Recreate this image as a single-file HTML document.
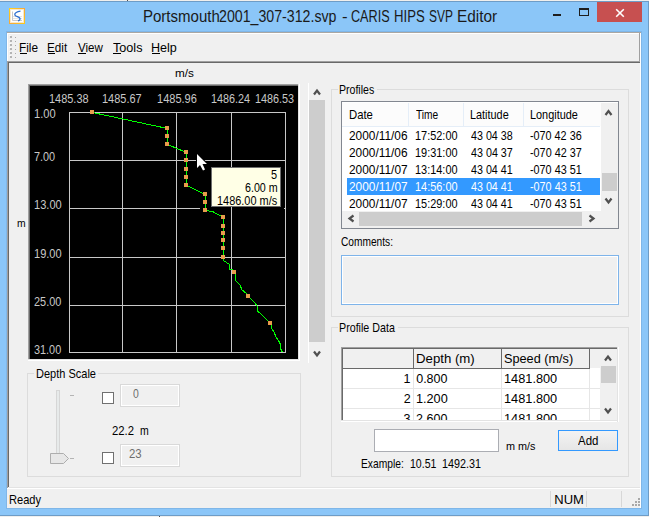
<!DOCTYPE html>
<html><head><meta charset="utf-8"><style>
html,body{margin:0;padding:0;}
body{width:649px;height:517px;position:relative;overflow:hidden;background:#8BC6F8;font-family:"Liberation Sans",sans-serif;}
div,span{position:absolute;}
span{white-space:pre;}
</style></head><body>
<div style="left:0px;top:0px;width:649px;height:1px;background:#F0EFED;"></div>
<div style="left:0px;top:1px;width:649px;height:1px;background:#6E9CC6;"></div>
<div style="left:648px;top:1px;width:1px;height:515px;background:#6E9CC6;"></div>
<div style="left:0px;top:515px;width:649px;height:1px;background:#6E9CC6;"></div>
<div style="left:0px;top:516px;width:649px;height:1px;background:#F0EFED;"></div>
<svg style="position:absolute;left:9px;top:8px" width="16" height="16" viewBox="0 0 16 16">
<defs><linearGradient id="ig" x1="0" y1="0" x2="1" y2="1"><stop offset="0" stop-color="#FFD21A"/><stop offset="0.5" stop-color="#F5A83A"/><stop offset="1" stop-color="#FFC81A"/></linearGradient></defs><rect x="0.5" y="0.5" width="15" height="15" fill="#FFFDF8" stroke="url(#ig)"/>
<rect x="1.5" y="1.5" width="13" height="13" fill="#fff" stroke="#F8E7C8" stroke-width="1"/>
<path d="M3.5 3.5 V12.5 H13" fill="none" stroke="#C8C8C8" stroke-width="1"/>
<path d="M4 8.5 H13 M4 10.5 H13" fill="none" stroke="#E4E4E4" stroke-width="1"/>
<path d="M11.5 3.2 C8 3.6 5.5 5 5.8 6.8 C6.2 8.6 10.5 8.8 11 10.5 C11.3 11.6 10 12.6 9 12.8" fill="none" stroke="#2E6FD0" stroke-width="1.3"/>
</svg>
<span style="left:142.80px;top:9px;font-size:16px;line-height:16px;color:#1A1A1A;transform:scaleX(0.9381);transform-origin:0 0;">Portsmouth</span>
<span style="left:219.49px;top:9px;font-size:16px;line-height:16px;color:#1A1A1A;transform:scaleX(0.8862);transform-origin:0 0;">2001_307-312.svp</span>
<span style="left:341.75px;top:9px;font-size:16px;line-height:16px;color:#1A1A1A;transform:scaleX(1.0459);transform-origin:0 0;">-</span>
<span style="left:351.17px;top:9px;font-size:16px;line-height:16px;color:#1A1A1A;transform:scaleX(0.7897);transform-origin:0 0;">CARIS</span>
<span style="left:394.35px;top:9px;font-size:16px;line-height:16px;color:#1A1A1A;transform:scaleX(0.8220);transform-origin:0 0;">HIPS</span>
<span style="left:429.46px;top:9px;font-size:16px;line-height:16px;color:#1A1A1A;transform:scaleX(0.7448);transform-origin:0 0;">SVP</span>
<span style="left:457.07px;top:9px;font-size:16px;line-height:16px;color:#1A1A1A;transform:scaleX(0.9598);transform-origin:0 0;">Editor</span>
<div style="left:127px;top:0px;width:1px;height:1px;background:#505050;"></div>
<div style="left:159px;top:516px;width:1px;height:1px;background:#505050;"></div>
<div style="left:553px;top:14px;width:8px;height:2px;background:#1E1E1E;"></div>
<div style="left:579px;top:8px;width:10px;height:2px;background:#1E1E1E;"></div>
<div style="left:579px;top:10px;width:1px;height:6px;background:#1E1E1E;"></div>
<div style="left:588px;top:10px;width:1px;height:6px;background:#1E1E1E;"></div>
<div style="left:579px;top:15px;width:10px;height:1px;background:#1E1E1E;"></div>
<div style="left:597px;top:2px;width:45px;height:20px;background:#C75050;"></div>
<svg style="position:absolute;left:614px;top:7px" width="12" height="12" viewBox="0 0 12 12"><path d="M2.2 2.2 L9.8 9.8 M9.8 2.2 L2.2 9.8" stroke="#fff" stroke-width="1.6"/></svg>
<div style="left:6px;top:31px;width:636px;height:478px;background:#7FB6E8;"></div>
<div style="left:7px;top:32px;width:634px;height:476px;background:#F0F0F0;"></div>
<div style="left:7px;top:32px;width:634px;height:1px;background:#A9A7A3;"></div>
<div style="left:7px;top:33px;width:633px;height:1px;background:#FFFFFF;"></div>
<div style="left:7px;top:33px;width:1px;height:29px;background:#FFFFFF;"></div>
<div style="left:639px;top:33px;width:1px;height:29px;background:#A0A0A0;"></div>
<div style="left:7px;top:61px;width:633px;height:1px;background:#A0A0A0;"></div>
<div style="left:7px;top:62px;width:633px;height:1px;background:#696969;"></div>
<div style="left:640px;top:33px;width:1px;height:475px;background:#FFFFFF;"></div>
<div style="left:10px;top:36px;width:2px;height:2px;background:#B4B4B4;"></div>
<div style="left:15px;top:37px;width:1px;height:1px;background:#A8A8A8;"></div>
<div style="left:9px;top:35px;width:2px;height:1px;background:#FAFAFA;"></div>
<div style="left:10px;top:40px;width:2px;height:2px;background:#B4B4B4;"></div>
<div style="left:15px;top:41px;width:1px;height:1px;background:#A8A8A8;"></div>
<div style="left:9px;top:39px;width:2px;height:1px;background:#FAFAFA;"></div>
<div style="left:10px;top:44px;width:2px;height:2px;background:#B4B4B4;"></div>
<div style="left:15px;top:45px;width:1px;height:1px;background:#A8A8A8;"></div>
<div style="left:9px;top:43px;width:2px;height:1px;background:#FAFAFA;"></div>
<div style="left:10px;top:48px;width:2px;height:2px;background:#B4B4B4;"></div>
<div style="left:15px;top:49px;width:1px;height:1px;background:#A8A8A8;"></div>
<div style="left:9px;top:47px;width:2px;height:1px;background:#FAFAFA;"></div>
<div style="left:10px;top:52px;width:2px;height:2px;background:#B4B4B4;"></div>
<div style="left:15px;top:53px;width:1px;height:1px;background:#A8A8A8;"></div>
<div style="left:9px;top:51px;width:2px;height:1px;background:#FAFAFA;"></div>
<div style="left:10px;top:56px;width:2px;height:2px;background:#B4B4B4;"></div>
<div style="left:15px;top:57px;width:1px;height:1px;background:#A8A8A8;"></div>
<div style="left:9px;top:55px;width:2px;height:1px;background:#FAFAFA;"></div>
<span style="left:19.26px;top:41px;font-size:13px;line-height:13px;color:#000;transform:scaleX(0.9086);transform-origin:0 0;">File</span>
<span style="left:47.37px;top:41px;font-size:13px;line-height:13px;color:#000;transform:scaleX(0.8986);transform-origin:0 0;">Edit</span>
<span style="left:77.84px;top:41px;font-size:13px;line-height:13px;color:#000;transform:scaleX(0.8894);transform-origin:0 0;">View</span>
<span style="left:112.95px;top:41px;font-size:13px;line-height:13px;color:#000;transform:scaleX(0.9717);transform-origin:0 0;">Tools</span>
<span style="left:150.70px;top:41px;font-size:13px;line-height:13px;color:#000;transform:scaleX(0.9660);transform-origin:0 0;">Help</span>
<div style="left:20px;top:53px;width:7px;height:1px;background:#000;"></div>
<div style="left:48px;top:53px;width:7px;height:1px;background:#000;"></div>
<div style="left:78px;top:53px;width:8px;height:1px;background:#000;"></div>
<div style="left:113px;top:53px;width:8px;height:1px;background:#000;"></div>
<div style="left:152px;top:53px;width:8px;height:1px;background:#000;"></div>
<div style="left:7px;top:62px;width:1px;height:426px;background:#A0A0A0;"></div>
<div style="left:8px;top:63px;width:1px;height:424px;background:#696969;"></div>
<div style="left:9px;top:487px;width:631px;height:1px;background:#E3E3E3;"></div>
<div style="left:7px;top:488px;width:634px;height:1px;background:#FFFFFF;"></div>
<span style="left:174.64px;top:68px;font-size:11.5px;line-height:11.5px;color:#000;transform:scaleX(1.0193);transform-origin:0 0;">m/s</span>
<span style="left:17.23px;top:218px;font-size:11.5px;line-height:11.5px;color:#000;transform:scaleX(0.9004);transform-origin:0 0;">m</span>
<div style="left:28px;top:84px;width:272px;height:277px;background:#FFFFFF;"></div>
<div style="left:28px;top:84px;width:271px;height:276px;background:#E3E3E3;"></div>
<div style="left:28px;top:84px;width:270px;height:275px;background:#A0A0A0;"></div>
<div style="left:29px;top:85px;width:269px;height:274px;background:#696969;"></div>
<div style="left:30px;top:86px;width:268px;height:273px;background:#000000;"></div>
<svg style="position:absolute;left:0;top:0" width="649" height="517" shape-rendering="crispEdges"><rect x="69" y="112" width="217" height="1" fill="#C8C8C8"/><rect x="69" y="160" width="217" height="1" fill="#C8C8C8"/><rect x="69" y="208" width="131" height="1" fill="#C8C8C8"/><rect x="284" y="208" width="2" height="1" fill="#C8C8C8"/><rect x="69" y="257" width="217" height="1" fill="#C8C8C8"/><rect x="69" y="305" width="217" height="1" fill="#C8C8C8"/><rect x="69" y="352" width="217" height="1" fill="#C8C8C8"/><rect x="69" y="112" width="1" height="241" fill="#C8C8C8"/><rect x="122" y="112" width="1" height="241" fill="#C8C8C8"/><rect x="176" y="112" width="1" height="241" fill="#C8C8C8"/><rect x="231" y="112" width="1" height="241" fill="#C8C8C8"/><rect x="285" y="112" width="1" height="241" fill="#C8C8C8"/><polyline fill="none" stroke="#00FF00" stroke-width="1" shape-rendering="crispEdges" points="92.5,112.5 167.5,128.5 167.5,144.5 186.5,152.5 186.5,185.5 205.5,194.5 205.5,210.5 212.5,211.5 223.5,217.5 223.5,257.5 223.5,260.5 229.5,264.5 229.5,269.5 232.5,269.5 234.5,272.5 235.5,274.5 235.5,280.5 240.5,285.5 241.5,289.5 246.5,293.5 248.5,296.5 250.5,298.5 254.5,302.5 257.5,306.5 257.5,311.5 259.5,312.5 264.5,317.5 268.5,321.5 270.5,323.5 271.5,325.5 271.5,328.5 274.5,332.5 275.5,336.5 278.5,340.5 280.5,344.5 280.5,348.5 282.5,352.5"/><rect x="90" y="110" width="4" height="4" fill="#E89C4C"/><rect x="165" y="126" width="4" height="4" fill="#E89C4C"/><rect x="165" y="134" width="4" height="4" fill="#E89C4C"/><rect x="165" y="142" width="4" height="4" fill="#E89C4C"/><rect x="184" y="150" width="4" height="4" fill="#E89C4C"/><rect x="184" y="158" width="4" height="4" fill="#E89C4C"/><rect x="184" y="167" width="4" height="4" fill="#E89C4C"/><rect x="184" y="175" width="4" height="4" fill="#E89C4C"/><rect x="184" y="183" width="4" height="4" fill="#E89C4C"/><rect x="203" y="192" width="4" height="4" fill="#E89C4C"/><rect x="203" y="200" width="4" height="4" fill="#E89C4C"/><rect x="203" y="208" width="4" height="4" fill="#E89C4C"/><rect x="221" y="215" width="4" height="4" fill="#E89C4C"/><rect x="221" y="224" width="4" height="4" fill="#E89C4C"/><rect x="221" y="231" width="4" height="4" fill="#E89C4C"/><rect x="221" y="238" width="4" height="4" fill="#E89C4C"/><rect x="221" y="246" width="4" height="4" fill="#E89C4C"/><rect x="221" y="255" width="4" height="4" fill="#E89C4C"/><rect x="232" y="270" width="4" height="4" fill="#E89C4C"/><rect x="246" y="294" width="4" height="4" fill="#E89C4C"/><rect x="268" y="321" width="4" height="4" fill="#E89C4C"/></svg>
<span style="left:49.18px;top:92px;font-size:13px;line-height:13px;color:#C8C8C8;transform:scaleX(0.8418);transform-origin:0 0;">1485.38</span>
<span style="left:101.88px;top:92px;font-size:13px;line-height:13px;color:#C8C8C8;transform:scaleX(0.8442);transform-origin:0 0;">1485.67</span>
<span style="left:156.57px;top:92px;font-size:13px;line-height:13px;color:#C8C8C8;transform:scaleX(0.8484);transform-origin:0 0;">1485.96</span>
<span style="left:211.19px;top:92px;font-size:13px;line-height:13px;color:#C8C8C8;transform:scaleX(0.8316);transform-origin:0 0;">1486.24</span>
<span style="left:255.39px;top:92px;font-size:13px;line-height:13px;color:#C8C8C8;transform:scaleX(0.8308);transform-origin:0 0;">1486.53</span>
<span style="left:33.97px;top:107px;font-size:13px;line-height:13px;color:#C8C8C8;transform:scaleX(0.8552);transform-origin:0 0;">1.00</span>
<span style="left:34.26px;top:150px;font-size:13px;line-height:13px;color:#C8C8C8;transform:scaleX(0.8354);transform-origin:0 0;">7.00</span>
<span style="left:33.97px;top:198px;font-size:13px;line-height:13px;color:#C8C8C8;transform:scaleX(0.8529);transform-origin:0 0;">13.00</span>
<span style="left:33.97px;top:247px;font-size:13px;line-height:13px;color:#C8C8C8;transform:scaleX(0.8497);transform-origin:0 0;">19.00</span>
<span style="left:34.25px;top:295px;font-size:13px;line-height:13px;color:#C8C8C8;transform:scaleX(0.8409);transform-origin:0 0;">25.00</span>
<span style="left:34.42px;top:343px;font-size:13px;line-height:13px;color:#C8C8C8;transform:scaleX(0.8357);transform-origin:0 0;">31.00</span>
<div style="left:211px;top:167px;width:70px;height:40px;background:#6E6E6E;"></div>
<div style="left:212px;top:168px;width:68px;height:38px;background:#FFFFE6;"></div>
<span style="left:271.36px;top:168px;font-size:13px;line-height:13px;color:#000;transform:scaleX(0.8421);transform-origin:0 0;">5</span>
<span style="left:244.97px;top:181px;font-size:13px;line-height:13px;color:#000;transform:scaleX(0.8228);transform-origin:0 0;">6.00 m</span>
<span style="left:217.18px;top:194px;font-size:13px;line-height:13px;color:#000;transform:scaleX(0.8412);transform-origin:0 0;">1486.00 m/s</span>
<svg style="position:absolute;left:0;top:0" width="649" height="517"><path d="M197 154 L197 168 L200 165 L203 170.5 L205 169.5 L202.5 164 L207 164 Z" fill="#fff" stroke="#000" stroke-width="2" paint-order="stroke"/></svg>
<div style="left:308px;top:83px;width:1px;height:280px;background:#FFFFFF;"></div>
<div style="left:309px;top:100px;width:16px;height:242px;background:#CDCDCD;"></div>
<svg style="position:absolute;left:0;top:0" width="649" height="517"><path d="M314 94.5 L317 90.5 L320 94.5" fill="none" stroke="#505050" stroke-width="2.2"/></svg>
<svg style="position:absolute;left:0;top:0" width="649" height="517"><path d="M314 351.5 L317 355.5 L320 351.5" fill="none" stroke="#505050" stroke-width="2.2"/></svg>
<div style="left:331px;top:89px;width:298px;height:1px;background:#DCDCDC;"></div>
<div style="left:331px;top:316px;width:298px;height:1px;background:#DCDCDC;"></div>
<div style="left:331px;top:89px;width:1px;height:228px;background:#DCDCDC;"></div>
<div style="left:628px;top:89px;width:1px;height:228px;background:#DCDCDC;"></div>
<div style="left:338px;top:89px;width:39px;height:1px;background:#F0F0F0;"></div>
<span style="left:339.46px;top:83px;font-size:13px;line-height:13px;color:#000;transform:scaleX(0.8122);transform-origin:0 0;">Profiles</span>
<div style="left:331px;top:327px;width:298px;height:1px;background:#DCDCDC;"></div>
<div style="left:331px;top:476px;width:298px;height:1px;background:#DCDCDC;"></div>
<div style="left:331px;top:327px;width:1px;height:150px;background:#DCDCDC;"></div>
<div style="left:628px;top:327px;width:1px;height:150px;background:#DCDCDC;"></div>
<div style="left:338px;top:327px;width:60px;height:1px;background:#F0F0F0;"></div>
<span style="left:339.44px;top:321px;font-size:13px;line-height:13px;color:#000;transform:scaleX(0.8223);transform-origin:0 0;">Profile Data</span>
<div style="left:27px;top:373px;width:274px;height:1px;background:#DCDCDC;"></div>
<div style="left:27px;top:476px;width:274px;height:1px;background:#DCDCDC;"></div>
<div style="left:27px;top:373px;width:1px;height:104px;background:#DCDCDC;"></div>
<div style="left:300px;top:373px;width:1px;height:104px;background:#DCDCDC;"></div>
<div style="left:34px;top:373px;width:64px;height:1px;background:#F0F0F0;"></div>
<span style="left:35.72px;top:367px;font-size:13px;line-height:13px;color:#000;transform:scaleX(0.8465);transform-origin:0 0;">Depth Scale</span>
<div style="left:341px;top:101px;width:278px;height:128px;background:#828790;"></div>
<div style="left:342px;top:102px;width:276px;height:126px;background:#FFFFFF;"></div>
<div style="left:342px;top:103px;width:259px;height:23px;background:#FCFCFC;"></div>
<div style="left:342px;top:126px;width:258px;height:1px;background:#E5EEF8;"></div>
<div style="left:408px;top:103px;width:1px;height:23px;background:#E5EEF8;"></div>
<div style="left:463px;top:103px;width:1px;height:23px;background:#E5EEF8;"></div>
<div style="left:523px;top:103px;width:1px;height:23px;background:#E5EEF8;"></div>
<span style="left:348.60px;top:108px;font-size:13px;line-height:13px;color:#000;transform:scaleX(0.8697);transform-origin:0 0;">Date</span>
<span style="left:416.30px;top:108px;font-size:13px;line-height:13px;color:#000;transform:scaleX(0.7819);transform-origin:0 0;">Time</span>
<span style="left:469.73px;top:108px;font-size:13px;line-height:13px;color:#000;transform:scaleX(0.8363);transform-origin:0 0;">Latitude</span>
<span style="left:529.63px;top:108px;font-size:13px;line-height:13px;color:#000;transform:scaleX(0.8377);transform-origin:0 0;">Longitude</span>
<span style="left:349.11px;top:129px;font-size:13px;line-height:13px;color:#000;transform:scaleX(0.9123);transform-origin:0 0;">2000/11/06</span>
<span style="left:415.18px;top:129px;font-size:13px;line-height:13px;color:#000;transform:scaleX(0.8405);transform-origin:0 0;">17:52:00</span>
<span style="left:470.59px;top:129px;font-size:13px;line-height:13px;color:#000;transform:scaleX(0.8235);transform-origin:0 0;">43 04 38</span>
<span style="left:530.01px;top:129px;font-size:13px;line-height:13px;color:#000;transform:scaleX(0.8307);transform-origin:0 0;">-070 42 36</span>
<span style="left:349.11px;top:146px;font-size:13px;line-height:13px;color:#000;transform:scaleX(0.9123);transform-origin:0 0;">2000/11/06</span>
<span style="left:415.18px;top:146px;font-size:13px;line-height:13px;color:#000;transform:scaleX(0.8405);transform-origin:0 0;">19:31:00</span>
<span style="left:470.59px;top:146px;font-size:13px;line-height:13px;color:#000;transform:scaleX(0.8256);transform-origin:0 0;">43 04 37</span>
<span style="left:530.01px;top:146px;font-size:13px;line-height:13px;color:#000;transform:scaleX(0.8324);transform-origin:0 0;">-070 42 37</span>
<span style="left:349.11px;top:163px;font-size:13px;line-height:13px;color:#000;transform:scaleX(0.9142);transform-origin:0 0;">2000/11/07</span>
<span style="left:415.18px;top:163px;font-size:13px;line-height:13px;color:#000;transform:scaleX(0.8405);transform-origin:0 0;">13:14:00</span>
<span style="left:470.59px;top:163px;font-size:13px;line-height:13px;color:#000;transform:scaleX(0.8245);transform-origin:0 0;">43 04 41</span>
<span style="left:530.01px;top:163px;font-size:13px;line-height:13px;color:#000;transform:scaleX(0.8316);transform-origin:0 0;">-070 43 51</span>
<div style="left:347px;top:178px;width:253px;height:17px;background:#3399FF;"></div>
<span style="left:349.11px;top:180px;font-size:13px;line-height:13px;color:#FFF;transform:scaleX(0.9142);transform-origin:0 0;">2000/11/07</span>
<span style="left:415.18px;top:180px;font-size:13px;line-height:13px;color:#FFF;transform:scaleX(0.8405);transform-origin:0 0;">14:56:00</span>
<span style="left:470.59px;top:180px;font-size:13px;line-height:13px;color:#FFF;transform:scaleX(0.8245);transform-origin:0 0;">43 04 41</span>
<span style="left:530.01px;top:180px;font-size:13px;line-height:13px;color:#FFF;transform:scaleX(0.8316);transform-origin:0 0;">-070 43 51</span>
<span style="left:349.11px;top:197px;font-size:13px;line-height:13px;color:#000;transform:scaleX(0.9142);transform-origin:0 0;">2000/11/07</span>
<span style="left:415.18px;top:197px;font-size:13px;line-height:13px;color:#000;transform:scaleX(0.8405);transform-origin:0 0;">15:29:00</span>
<span style="left:470.59px;top:197px;font-size:13px;line-height:13px;color:#000;transform:scaleX(0.8245);transform-origin:0 0;">43 04 41</span>
<span style="left:530.01px;top:197px;font-size:13px;line-height:13px;color:#000;transform:scaleX(0.8316);transform-origin:0 0;">-070 43 51</span>
<div style="left:601px;top:103px;width:17px;height:125px;background:#F0F0F0;"></div>
<div style="left:342px;top:211px;width:259px;height:17px;background:#F0F0F0;"></div>
<div style="left:602px;top:173px;width:15px;height:18px;background:#CDCDCD;"></div>
<div style="left:359px;top:212px;width:223px;height:14px;background:#CDCDCD;"></div>
<svg style="position:absolute;left:0;top:0" width="649" height="517"><path d="M605.5 115.0 L608.5 111.0 L611.5 115.0" fill="none" stroke="#505050" stroke-width="2.2"/></svg>
<svg style="position:absolute;left:0;top:0" width="649" height="517"><path d="M605.5 198.5 L608.5 202.5 L611.5 198.5" fill="none" stroke="#505050" stroke-width="2.2"/></svg>
<svg style="position:absolute;left:0;top:0" width="649" height="517"><path d="M353.5 215.5 L349.5 218.5 L353.5 221.5" fill="none" stroke="#505050" stroke-width="2.2"/></svg>
<svg style="position:absolute;left:0;top:0" width="649" height="517"><path d="M589.5 215.5 L593.5 218.5 L589.5 221.5" fill="none" stroke="#505050" stroke-width="2.2"/></svg>
<span style="left:341.09px;top:235px;font-size:13px;line-height:13px;color:#000;transform:scaleX(0.7824);transform-origin:0 0;">Comments:</span>
<div style="left:341px;top:255px;width:278px;height:50px;background:#7EB4EA;"></div>
<div style="left:342px;top:256px;width:276px;height:48px;background:#FFFFFF;"></div>
<div style="left:343px;top:257px;width:274px;height:46px;background:#F0F0F0;"></div>
<div style="left:341px;top:347px;width:278px;height:75px;background:#FFFFFF;"></div>
<div style="left:341px;top:347px;width:277px;height:74px;background:#E3E3E3;"></div>
<div style="left:341px;top:347px;width:276px;height:73px;background:#A0A0A0;"></div>
<div style="left:342px;top:348px;width:275px;height:72px;background:#696969;"></div>
<div style="left:343px;top:349px;width:274px;height:71px;background:#FFFFFF;"></div>
<div style="left:343px;top:349px;width:257px;height:19px;background:#F0F0F0;"></div>
<div style="left:343px;top:368px;width:247px;height:1px;background:#696969;"></div>
<div style="left:413px;top:349px;width:1px;height:20px;background:#696969;"></div>
<div style="left:501px;top:349px;width:1px;height:20px;background:#696969;"></div>
<div style="left:589px;top:349px;width:1px;height:20px;background:#696969;"></div>
<div style="left:343px;top:388px;width:257px;height:1px;background:#E6E6E6;"></div>
<div style="left:343px;top:408px;width:257px;height:1px;background:#E6E6E6;"></div>
<div style="left:413px;top:369px;width:1px;height:51px;background:#E6E6E6;"></div>
<div style="left:501px;top:369px;width:1px;height:51px;background:#E6E6E6;"></div>
<div style="left:589px;top:369px;width:1px;height:51px;background:#E6E6E6;"></div>
<span style="left:415.64px;top:353px;font-size:12.5px;line-height:12.5px;color:#000;transform:scaleX(1.0567);transform-origin:0 0;">Depth (m)</span>
<span style="left:504.13px;top:353px;font-size:12.5px;line-height:12.5px;color:#000;transform:scaleX(1.0157);transform-origin:0 0;">Speed (m/s)</span>
<span style="left:403.62px;top:373px;font-size:12.5px;line-height:12.5px;color:#000;">1</span>
<span style="left:416.20px;top:373px;font-size:12.5px;line-height:12.5px;color:#000;">0.800</span>
<span style="left:503.74px;top:373px;font-size:12.5px;line-height:12.5px;color:#000;transform:scaleX(1.0207);transform-origin:0 0;">1481.800</span>
<span style="left:403.69px;top:393px;font-size:12.5px;line-height:12.5px;color:#000;">2</span>
<span style="left:415.75px;top:393px;font-size:12.5px;line-height:12.5px;color:#000;transform:scaleX(1.0142);transform-origin:0 0;">1.200</span>
<span style="left:503.74px;top:393px;font-size:12.5px;line-height:12.5px;color:#000;transform:scaleX(1.0207);transform-origin:0 0;">1481.800</span>
<span style="left:403.56px;top:413px;font-size:12.5px;line-height:12.5px;color:#000;">3</span>
<span style="left:416.07px;top:413px;font-size:12.5px;line-height:12.5px;color:#000;">2.600</span>
<span style="left:503.74px;top:413px;font-size:12.5px;line-height:12.5px;color:#000;transform:scaleX(1.0207);transform-origin:0 0;">1481.800</span>
<div style="left:341px;top:420px;width:278px;height:5px;background:#F0F0F0;"></div>
<div style="left:341px;top:420px;width:278px;height:1px;background:#E3E3E3;"></div>
<div style="left:341px;top:421px;width:278px;height:1px;background:#FFFFFF;"></div>
<div style="left:617px;top:347px;width:1px;height:75px;background:#E3E3E3;"></div>
<div style="left:618px;top:347px;width:1px;height:75px;background:#FFFFFF;"></div>
<div style="left:600px;top:349px;width:17px;height:71px;background:#F0F0F0;"></div>
<div style="left:601px;top:366px;width:15px;height:17px;background:#CDCDCD;"></div>
<svg style="position:absolute;left:0;top:0" width="649" height="517"><path d="M605 360.5 L608 356.5 L611 360.5" fill="none" stroke="#505050" stroke-width="2.2"/></svg>
<svg style="position:absolute;left:0;top:0" width="649" height="517"><path d="M605 408.5 L608 412.5 L611 408.5" fill="none" stroke="#505050" stroke-width="2.2"/></svg>
<div style="left:374px;top:429px;width:125px;height:23px;background:#ABADB3;"></div>
<div style="left:375px;top:430px;width:123px;height:21px;background:#FFFFFF;"></div>
<span style="left:505.90px;top:441px;font-size:11.5px;line-height:11.5px;color:#000;transform:scaleX(0.9426);transform-origin:0 0;">m m/s</span>
<div style="left:558px;top:430px;width:60px;height:21px;background:#3399FF;"></div>
<div style="left:559px;top:431px;width:58px;height:19px;background:#F0F0F0;background:linear-gradient(#F3F3F3,#E6E6E6);"></div>
<span style="left:577.70px;top:434px;font-size:13px;line-height:13px;color:#000;transform:scaleX(0.8810);transform-origin:0 0;">Add</span>
<span style="left:361.18px;top:457px;font-size:13px;line-height:13px;color:#000;transform:scaleX(0.7904);transform-origin:0 0;">Example:</span>
<span style="left:410.31px;top:457px;font-size:13px;line-height:13px;color:#000;transform:scaleX(0.8112);transform-origin:0 0;">10.51</span>
<span style="left:442.39px;top:457px;font-size:13px;line-height:13px;color:#000;transform:scaleX(0.8298);transform-origin:0 0;">1492.31</span>
<div style="left:56px;top:390px;width:4px;height:67px;background:#D6D6D6;"></div>
<div style="left:57px;top:391px;width:2px;height:65px;background:#E7EAEA;"></div>
<div style="left:70px;top:395px;width:4px;height:1px;background:#B4B4B4;"></div>
<div style="left:70px;top:458px;width:4px;height:1px;background:#B4B4B4;"></div>
<svg style="position:absolute;left:0;top:0" width="649" height="517"><path d="M50.5 453.5 H63.5 L68.5 458.5 L63.5 463.5 H50.5 Z" fill="#E7E7E7" stroke="#ADADAD" stroke-width="1"/></svg>
<div style="left:102px;top:392px;width:12px;height:12px;background:#707070;"></div>
<div style="left:103px;top:393px;width:10px;height:10px;background:#FFFFFF;"></div>
<div style="left:102px;top:452px;width:12px;height:12px;background:#707070;"></div>
<div style="left:103px;top:453px;width:10px;height:10px;background:#FFFFFF;"></div>
<div style="left:120px;top:384px;width:60px;height:23px;background:#D9D9D9;"></div>
<div style="left:121px;top:385px;width:58px;height:21px;background:#FFFFFF;"></div>
<div style="left:122px;top:386px;width:56px;height:19px;background:#F0F0F0;"></div>
<div style="left:120px;top:444px;width:60px;height:23px;background:#D9D9D9;"></div>
<div style="left:121px;top:445px;width:58px;height:21px;background:#FFFFFF;"></div>
<div style="left:122px;top:446px;width:56px;height:19px;background:#F0F0F0;"></div>
<span style="left:132.58px;top:387px;font-size:13px;line-height:13px;color:#6D6D6D;transform:scaleX(0.8013);transform-origin:0 0;">0</span>
<span style="left:129.23px;top:447px;font-size:13px;line-height:13px;color:#6D6D6D;transform:scaleX(0.8748);transform-origin:0 0;">23</span>
<span style="left:112.23px;top:424px;font-size:13px;line-height:13px;color:#000;transform:scaleX(0.8714);transform-origin:0 0;">22.2</span>
<span style="left:140.12px;top:424px;font-size:13px;line-height:13px;color:#000;transform:scaleX(0.8074);transform-origin:0 0;">m</span>
<span style="left:8.71px;top:493px;font-size:13px;line-height:13px;color:#000;transform:scaleX(0.8514);transform-origin:0 0;">Ready</span>
<span style="left:554.26px;top:493px;font-size:13px;line-height:13px;color:#000;">NUM</span>
<div style="left:550px;top:491px;width:1px;height:16px;background:#D7D7D7;"></div>
<div style="left:586px;top:491px;width:1px;height:16px;background:#D7D7D7;"></div>
<div style="left:621px;top:491px;width:1px;height:16px;background:#D7D7D7;"></div>
<div style="left:638px;top:498px;width:2px;height:2px;background:#A8A8A8;"></div>
<div style="left:635px;top:501px;width:2px;height:2px;background:#A8A8A8;"></div>
<div style="left:638px;top:501px;width:2px;height:2px;background:#A8A8A8;"></div>
<div style="left:632px;top:504px;width:2px;height:2px;background:#A8A8A8;"></div>
<div style="left:635px;top:504px;width:2px;height:2px;background:#A8A8A8;"></div>
<div style="left:638px;top:504px;width:2px;height:2px;background:#A8A8A8;"></div>
</body></html>
